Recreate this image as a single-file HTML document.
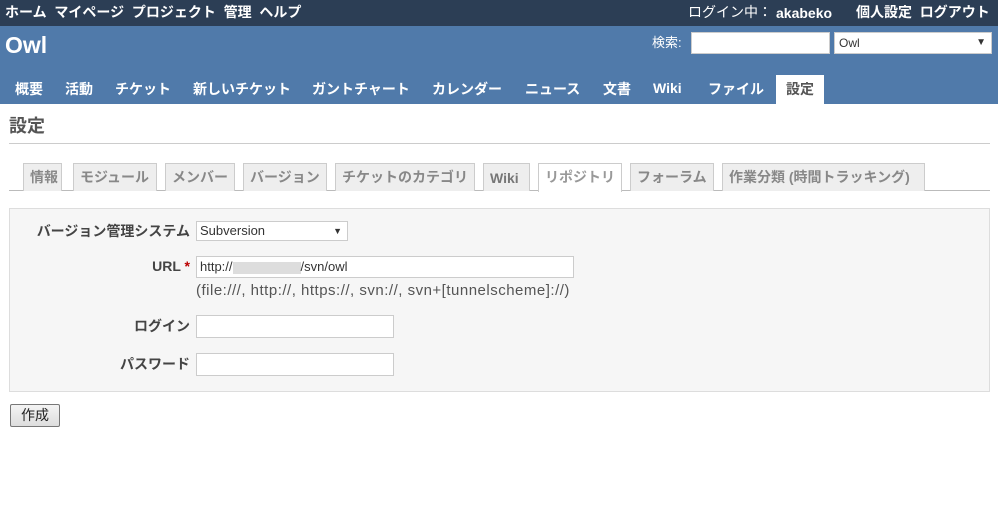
<!DOCTYPE html>
<html><head><meta charset="utf-8"><style>
*{box-sizing:border-box;margin:0;padding:0}
body{width:998px;height:521px;background:#fff;font-family:"Liberation Sans","Noto Sans CJK JP",sans-serif;position:relative;overflow:hidden;color:#333}
.a{position:absolute;white-space:nowrap;line-height:20px}
#top{left:0;top:0;width:998px;height:26px;background:#2c3e55}
#hd{left:0;top:26px;width:998px;height:78px;background:#507aaa}
.tm{color:#fff;font-size:14px;font-weight:bold;top:2px}
.mm{color:#fff;font-size:14px;font-weight:bold;top:79px}
.tab{top:163px;height:28px;background:#eee;border:1px solid #ccc;border-bottom:none;color:#888;font-size:14px;font-weight:bold;padding:3px 0 0 6px}
.lbl{font-size:14px;font-weight:bold;color:#444;text-align:right;width:190px;left:0}
</style></head><body>
<div class="a" id="top"></div>
<div class="a" id="hd"></div>
<div class="a tm" style="left:5px">ホーム&nbsp; マイページ&nbsp; プロジェクト&nbsp; 管理&nbsp; ヘルプ</div>
<div class="a tm" style="left:688px;font-weight:normal">ログイン中：</div>
<div class="a tm" style="left:776px;top:3px">akabeko</div>
<div class="a tm" style="left:856px">個人設定&nbsp; ログアウト</div>
<div class="a" style="left:5px;top:31px;color:#fff;font-size:23px;font-weight:bold;line-height:28px">Owl</div>
<div class="a" style="left:652px;top:33px;color:#fff;font-size:13px">検索:</div>
<div class="a" style="left:691px;top:32px;width:139px;height:22px;background:#fff;border:1px solid #ccc"></div>
<div class="a" style="left:834px;top:32px;width:158px;height:22px;background:#fff;border:1px solid #ccc;font-size:12px;padding:0 4px">Owl<span style="position:absolute;right:5px;top:0;font-size:10px">▼</span></div>
<div class="a mm" style="left:15px">概要</div>
<div class="a mm" style="left:65px">活動</div>
<div class="a mm" style="left:115px">チケット</div>
<div class="a mm" style="left:193px">新しいチケット</div>
<div class="a mm" style="left:312px">ガントチャート</div>
<div class="a mm" style="left:432px">カレンダー</div>
<div class="a mm" style="left:525px">ニュース</div>
<div class="a mm" style="left:603px">文書</div>
<div class="a mm" style="left:653px;top:78px">Wiki</div>
<div class="a mm" style="left:708px">ファイル</div>
<div class="a" style="left:776px;top:75px;width:48px;height:29px;background:#fff"></div>
<div class="a mm" style="left:786px;color:#555">設定</div>
<div class="a" style="left:9px;top:114px;font-size:18px;font-weight:bold;color:#555;line-height:24px">設定</div>
<div class="a" style="left:9px;top:143px;width:981px;height:1px;background:#ccc"></div>
<div class="a" style="left:9px;top:190px;width:981px;height:1px;background:#bbb"></div>
<div class="a tab" style="left:23px;width:39px">情報</div>
<div class="a tab" style="left:73px;width:84px">モジュール</div>
<div class="a tab" style="left:165px;width:70px">メンバー</div>
<div class="a tab" style="left:243px;width:84px">バージョン</div>
<div class="a tab" style="left:335px;width:140px">チケットのカテゴリ</div>
<div class="a tab" style="left:483px;width:47px;padding-top:4px;color:#777">Wiki</div>
<div class="a tab" style="left:538px;width:84px;background:#fff;height:29px;color:#999">リポジトリ</div>
<div class="a tab" style="left:630px;width:84px">フォーラム</div>
<div class="a tab" style="left:722px;width:203px">作業分類 (時間トラッキング)</div>
<div class="a" style="left:9px;top:208px;width:981px;height:184px;background:#f6f6f6;border:1px solid #ddd"></div>
<div class="a lbl" style="top:221px">バージョン管理システム</div>
<div class="a" style="left:196px;top:221px;width:152px;height:20px;background:#fff;border:1px solid #ccc;font-size:13px;padding:0 3px;line-height:18px">Subversion<span style="position:absolute;right:5px;top:0;font-size:9px">▼</span></div>
<div class="a lbl" style="top:256px">URL <span style="color:#b00">*</span></div>
<div class="a" style="left:196px;top:256px;width:378px;height:22px;background:#fff;border:1px solid #ccc;font-size:13px;padding:0 3px">http://<span style="display:inline-block;width:68px;height:12px;background:#ddd;vertical-align:middle"></span>/svn/owl</div>
<div class="a" style="left:196px;top:281px;font-size:15px;letter-spacing:0.5px;color:#555">(file:///, http://, https://, svn://, svn+[tunnelscheme]://)</div>
<div class="a lbl" style="top:316px">ログイン</div>
<div class="a" style="left:196px;top:315px;width:198px;height:23px;background:#fff;border:1px solid #ccc"></div>
<div class="a lbl" style="top:354px">パスワード</div>
<div class="a" style="left:196px;top:353px;width:198px;height:23px;background:#fff;border:1px solid #ccc"></div>
<div class="a" style="left:10px;top:404px;width:50px;height:23px;background:linear-gradient(#f4f4f4,#ddd);border:1px solid #777;border-radius:2px;font-size:14px;text-align:center;color:#222">作成</div>
</body></html>
